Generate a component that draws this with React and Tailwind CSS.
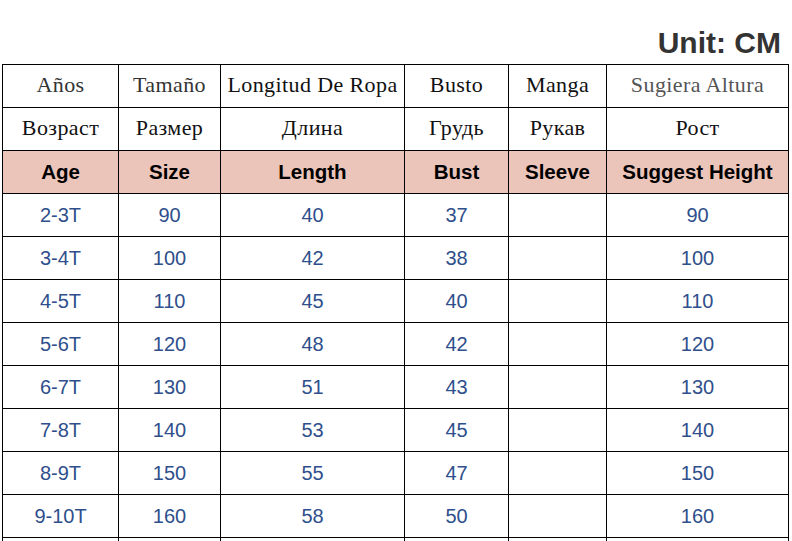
const cols = ['w-[116px]', 'w-[102px]', 'w-[184px]', 'w-[104px]', 'w-[98px]', 'w-[182px]']

const spanish = [
  { t: 'Años', c: 'text-[#333]' },
  { t: 'Tamaño', c: 'text-[#333]' },
  { t: 'Longitud De Ropa', c: 'text-[#111]' },
  { t: 'Busto', c: 'text-[#111]' },
  { t: 'Manga', c: 'text-[#111]' },
  { t: 'Sugiera Altura', c: 'text-[#555]' },
]

const russian = ['Возраст', 'Размер', 'Длина', 'Грудь', 'Рукав', 'Рост']
const english = ['Age', 'Size', 'Length', 'Bust', 'Sleeve', 'Suggest Height']

const rows = [
  ['2-3T', '90', '40', '37', '', '90'],
  ['3-4T', '100', '42', '38', '', '100'],
  ['4-5T', '110', '45', '40', '', '110'],
  ['5-6T', '120', '48', '42', '', '120'],
  ['6-7T', '130', '51', '43', '', '130'],
  ['7-8T', '140', '53', '45', '', '140'],
  ['8-9T', '150', '55', '47', '', '150'],
  ['9-10T', '160', '58', '50', '', '160'],
  ['', '', '', '', '', ''],
]

const serif = "font-['Palatino_Linotype','Book_Antiqua','Liberation_Serif',serif]"
const sans = "font-['Liberation_Sans',Arial,sans-serif]"

export default function App() {
  return (
    <div className="w-[792px] h-[541px] overflow-hidden bg-white">
      <div className={`h-[64px] pt-[28px] pr-[11px] text-right ${sans}`}>
        <span className="text-[30px] leading-[30px] font-bold text-[#333]">Unit: CM</span>
      </div>

      <table className="ml-[2px] border-collapse table-fixed w-[787px]">
        <colgroup>
          {cols.map((w, i) => <col key={i} className={w} />)}
        </colgroup>
        <tbody>
          <tr className="h-[43px]">
            {spanish.map((s, i) => (
              <td key={i} className={`border border-black text-center p-0 pb-[3px] text-[22px] tracking-[0.4px] whitespace-nowrap ${serif} ${s.c}`}>{s.t}</td>
            ))}
          </tr>
          <tr className="h-[43px]">
            {russian.map((t, i) => (
              <td key={i} className={`border border-black text-center p-0 pb-[3px] text-[22px] tracking-[0.4px] text-[#111] ${serif}`}>{t}</td>
            ))}
          </tr>
          <tr className="h-[43px] bg-[#ebc4ba]">
            {english.map((t, i) => (
              <td key={i} className={`border border-black text-center p-0 text-[20.5px] font-bold text-black whitespace-nowrap ${sans}`}>{t}</td>
            ))}
          </tr>
          {rows.map((r, ri) => (
            <tr key={ri} className="h-[43px]">
              {r.map((t, i) => (
                <td key={i} className={`border border-black text-center p-0 text-[20px] text-[#2f4f8c] ${sans}`}>{t}</td>
              ))}
            </tr>
          ))}
        </tbody>
      </table>
    </div>
  )
}
